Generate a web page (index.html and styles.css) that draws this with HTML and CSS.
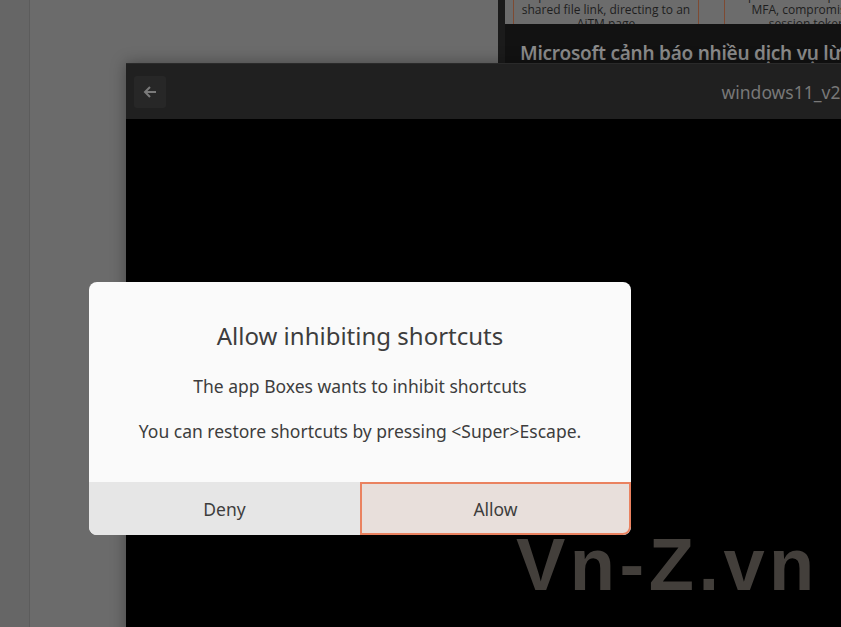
FILE: index.html
```html
<!DOCTYPE html>
<html lang="en">
<head>
<meta charset="utf-8">
<title>Allow inhibiting shortcuts</title>
<link rel="stylesheet" href="styles.css">
</head>
<body>
<div class="desktop">
  <div class="side-strip"></div>
  <div class="workspace"></div>

  <article class="news">
    <div class="figure">
      <div class="step">Recipient accesses the malicious<br>shared file link, directing to an<br>AiTM page</div>
      <div class="step step-2">Recipient submits password and<br>MFA, compromising<br>session token</div>
    </div>
    <h2 class="headline">Microsoft cảnh báo nhiều dịch vụ lừa đảo</h2>
  </article>

  <section class="app-window">
    <header class="titlebar">
      <button class="back" aria-label="Back">
        <svg width="16" height="16" viewBox="0 0 16 16"><path d="M14 8H3M8 3L3 8l5 5" fill="none" stroke="#7a7a7a" stroke-width="2"/></svg>
      </button>
      <span class="title">windows11_v2</span>
    </header>
    <div class="screen"></div>
  </section>

  <div class="dialog">
    <div class="dialog-body">
      <h1 class="dialog-title">Allow inhibiting shortcuts</h1>
      <p class="dialog-text">The app Boxes wants to inhibit shortcuts</p>
      <p class="dialog-text">You can restore shortcuts by pressing &lt;Super&gt;Escape.</p>
    </div>
    <div class="dialog-actions">
      <button class="btn deny">Deny</button>
      <button class="btn allow">Allow</button>
    </div>
  </div>

  <div class="watermark">Vn-Z.vn</div>
</div>
</body>
</html>
```

FILE: styles.css
```css
* { box-sizing: border-box; }
html, body { margin: 0; padding: 0; }
body {
  width: 841px;
  height: 627px;
  overflow: hidden;
  background: #6a6a6a;
  font-family: "Noto Sans", "Open Sans", sans-serif;
}
.desktop {
  position: relative;
  width: 841px;
  height: 627px;
  overflow: hidden;
  display: flex;
}
.side-strip {
  width: 30px;
  background: #666666;
  border-right: 1px solid #5c5c5c;
  box-shadow: 1px 0 3px rgba(0,0,0,0.15);
}
.workspace { flex: 1; background: #6b6b6b; }

/* news window behind */
.news {
  position: absolute;
  left: 498px;
  top: -40px;
  width: 343px;
  height: 200px;
  overflow: hidden;
  background: #121212;
  border-left: 7px solid #1b1b1b;
}
.figure {
  height: 64px;
  background: #6c6c6c;
  display: flex;
  gap: 25px;
  padding-left: 8px;
  overflow: hidden;
}
.step {
  width: 186px;
  flex: none;
  border-left: 1.5px solid #7e4a32;
  border-right: 1.5px solid #7e4a32;
  font-family: "Open Sans", "Noto Sans", sans-serif;
  font-size: 12px;
  line-height: 14px;
  color: #1e1e1e;
  text-align: center;
  padding-top: 29px;
  white-space: nowrap;
}
.step-2 { width: 166px; }
.headline {
  margin: 0;
  padding: 15px 0 0 15px;
  font-family: "Noto Sans", "Open Sans", sans-serif;
  font-weight: 600;
  font-size: 19px;
  letter-spacing: -0.25px;
  line-height: 28px;
  color: #8a8a8a;
  white-space: nowrap;
}

/* app window */
.app-window {
  position: absolute;
  left: 126px;
  top: 63px;
  width: 1310px;
  height: 700px;
  background: #000;
  box-shadow: 0 0 14px rgba(0,0,0,0.35);
  display: flex;
  flex-direction: column;
}
.titlebar {
  height: 56px;
  background: #202020;
  border-top: 1px solid #2a2a2a;
  display: flex;
  align-items: center;
  padding-left: 8px;
  position: relative;
}
.back {
  width: 32px;
  height: 32px;
  border: 0;
  border-radius: 3px;
  background: #272727;
  display: flex;
  align-items: center;
  justify-content: center;
  padding: 0;
}
.title {
  position: absolute;
  left: 0;
  right: 0;
  text-align: center;
  font-size: 17.5px;
  color: #787878;
  pointer-events: none;
}
.screen { flex: 1; background: #000; }

/* dialog */
.dialog {
  position: absolute;
  left: 89px;
  top: 282px;
  width: 542px;
  height: 253px;
  background: #fafafa;
  border-radius: 8px;
  overflow: hidden;
  display: flex;
  flex-direction: column;
  color: #3d3d3d;
}
.dialog-body {
  height: 200px;
  text-align: center;
  padding-top: 38px;
}
.dialog-title {
  margin: 0 0 22px;
  font-weight: 400;
  font-size: 24px;
  line-height: 32px;
}
.dialog-text {
  margin: 0 0 21px;
  font-size: 17.5px;
  line-height: 24px;
}
.dialog-actions {
  flex: 1;
  display: flex;
}
.btn {
  width: 50%;
  flex: none;
  border: 0;
  margin: 0;
  font-family: inherit;
  font-size: 17.5px;
  color: #3d3d3d;
}
.deny { background: #e6e6e6; }
.allow {
  background: #e8dfdb;
  border: 2px solid #ea8260;
  border-bottom-right-radius: 8px;
}

.watermark {
  position: absolute;
  left: 516px;
  top: 522px;
  font-family: "Liberation Sans", Arial, sans-serif;
  font-weight: 700;
  font-size: 74px;
  letter-spacing: 4.5px;
  color: #433f3b;
  line-height: 86px;
}
```
